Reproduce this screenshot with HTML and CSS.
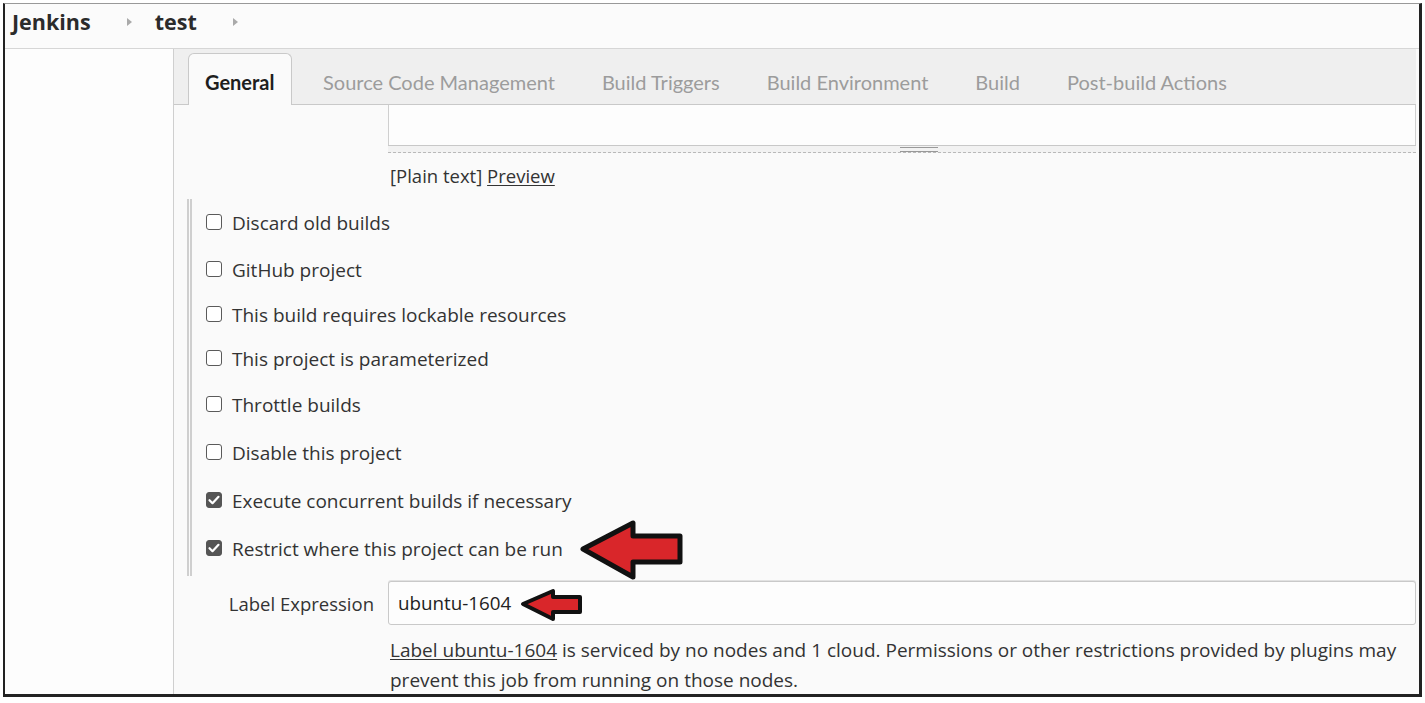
FILE: index.html
```html
<!DOCTYPE html>
<html lang="en">
<head>
<meta charset="utf-8">
<title>test Config [Jenkins]</title>
<link rel="stylesheet" href="styles.css">
</head>
<body>
<div class="frame">
  <header class="crumbs">
    <span class="crumb">Jenkins</span><span class="sep"></span><span class="crumb">test</span><span class="sep"></span>
  </header>
  <div class="layout">
    <aside class="side"></aside>
    <main class="main">
      <nav class="tabs">
        <div class="tab active">General</div>
        <div class="tab first">Source Code Management</div>
        <div class="tab">Build Triggers</div>
        <div class="tab">Build Environment</div>
        <div class="tab">Build</div>
        <div class="tab">Post-build Actions</div>
      </nav>
      <div class="content">
        <div class="desc">
          <div class="textarea"></div>
          <div class="grip"><span class="grip-handle"></span></div>
        </div>
        <div class="markup">[Plain text] <a class="link">Preview</a></div>
        <section class="opts">
          <label class="opt"><span class="box"></span>Discard old builds</label>
          <label class="opt h46"><span class="box"></span>GitHub project</label>
          <label class="opt h43"><span class="box"></span>This build requires lockable resources</label>
          <label class="opt h45"><span class="box"></span>This project is parameterized</label>
          <label class="opt"><span class="box"></span>Throttle builds</label>
          <label class="opt"><span class="box"></span>Disable this project</label>
          <label class="opt"><span class="box checked"><svg viewBox="0 0 16 16" width="16" height="16"><path d="M3.5 8.2l3 3 6-6.4" fill="none" stroke="#fff" stroke-width="2.2" stroke-linecap="round" stroke-linejoin="round"/></svg></span>Execute concurrent builds if necessary</label>
          <label class="opt"><span class="box checked"><svg viewBox="0 0 16 16" width="16" height="16"><path d="M3.5 8.2l3 3 6-6.4" fill="none" stroke="#fff" stroke-width="2.2" stroke-linecap="round" stroke-linejoin="round"/></svg></span>Restrict where this project can be run</label>
        </section>
        <div class="field">
          <span class="flabel">Label Expression</span>
          <div class="input">ubuntu-1604</div>
        </div>
        <p class="help"><a class="link">Label ubuntu-1604</a> is serviced by no nodes and 1 cloud. Permissions or other restrictions provided by plugins may prevent this job from running on those nodes.</p>
      </div>
    </main>
  </div>
  <svg class="arrow arrow-big" width="115" height="70" viewBox="0 0 115 70">
    <polygon points="8,34 58,8 58,21 105,21 105,47 58,47 58,62" fill="#d9262a" stroke="#111" stroke-width="5" stroke-linejoin="round"/>
  </svg>
  <svg class="arrow arrow-small" width="70" height="42" viewBox="0 0 70 42">
    <polygon points="5,19 35,6 35,12 62,12 62,27 35,27 35,34" fill="#d9262a" stroke="#111" stroke-width="4" stroke-linejoin="round"/>
  </svg>
</div>
</body>
</html>
```
FILE: styles.css
```css
html, body {
  margin: 0;
  padding: 0;
  background: #ffffff;
}

body {
  font-family: "Open Sans", "Noto Sans", sans-serif;
  color: #333;
}

.frame {
  position: relative;
  box-sizing: border-box;
  margin: 3px 0 0 3px;
  width: 1419px;
  height: 694px;
  border-left: 2px solid #222;
  border-right: 3px solid #222;
  border-top: 1px solid #999;
  border-bottom: 3px solid #222;
  background: #fcfcfc;
  overflow: hidden;
  display: flex;
  flex-direction: column;
}

/* breadcrumb header */
.crumbs {
  height: 45px;
  flex: none;
  border-bottom: 1px solid #d6d6d6;
  display: flex;
  align-items: center;
  padding-left: 7px;
  padding-bottom: 9px;
  box-sizing: border-box;
  background: #fbfbfb;
}

.crumb {
  font-weight: 700;
  font-size: 21.5px;
  color: #2b2b2b;
}

.sep {
  width: 0;
  height: 0;
  border-top: 4px solid transparent;
  border-bottom: 4px solid transparent;
  border-left: 5px solid #aaa;
  margin: 0 23px 0 36px;
}

.layout {
  flex: 1;
  display: flex;
  min-height: 0;
}

.side {
  width: 168px;
  flex: none;
  border-right: 1px solid #cfcfcf;
  background: #fdfdfd;
}

.main {
  flex: 1;
  padding-right: 3px;
  min-width: 0;
  background: #fafafa;
}

/* tabs */
.tabs {
  height: 56px;
  box-sizing: border-box;
  background: #efefef;
  border-bottom: 1px solid #c9c9c9;
  display: flex;
  align-items: flex-end;
  padding-left: 14px;
}

.tab {
  height: 51px;
  display: flex;
  align-items: center;
  padding: 6px 23.5px 0;
  box-sizing: border-box;
  font-family: Lato, "Open Sans", sans-serif;
  font-size: 20px;
  color: #9c9c9c;
  white-space: nowrap;
}

.tab.first {
  margin-left: 8px;
}

.tab.active {
  height: 52px;
  margin-bottom: -1px;
  padding: 4px 16px 0;
  background: #fafafa;
  border: 1px solid #c9c9c9;
  border-bottom: none;
  border-radius: 6px 6px 0 0;
  color: #1e1e1e;
  font-weight: 700;
}

/* description textarea remnant */
.desc {
  margin-left: 214px;
}

.textarea {
  height: 40px;
  background: #fdfdfd;
  border-left: 1px solid #cfcfcf;
  border-right: 1px solid #cfcfcf;
}

.grip {
  height: 6px;
  border-top: 1px solid #c8c8c8;
  border-bottom: 1px dashed #b9b9b9;
  background: #f2f2f2;
  display: flex;
  justify-content: center;
  padding-left: 34px;
}

.grip-handle {
  width: 38px;
  height: 3px;
  margin-top: 1px;
  border-top: 1px solid #999;
  border-bottom: 1px solid #999;
}

.markup {
  margin: 11px 0 0 216px;
  font-size: 18.5px;
  line-height: 24px;
  color: #333;
}

.link {
  color: #333;
  text-decoration: underline;
  text-underline-offset: 2px;
}

/* options */
.opts {
  margin: 11px 0 0 13px;
  padding-bottom: 3px;
  border-left: 5px double #cfcfcf;
  display: flex;
  flex-direction: column;
}

.opt {
  height: 48px;
  display: flex;
  align-items: center;
  gap: 10px;
  padding-left: 14px;
  font-size: 19px;
  color: #333;
}

.opt.h46 { height: 46px; }
.opt.h43 { height: 43px; }
.opt.h45 { height: 45px; }

.box {
  width: 16px;
  height: 16px;
  box-sizing: border-box;
  border: 1.5px solid #5a5a5a;
  border-radius: 3px;
  background: #fff;
  flex: none;
  display: flex;
  align-items: center;
  justify-content: center;
  margin-top: -2px;
}

.box.checked {
  background: #555;
  border-color: #555;
}

.box svg {
  display: block;
  flex: none;
}

/* label expression */
.field {
  margin-top: 5px;
  display: flex;
  align-items: center;
  height: 44px;
}

.flabel {
  width: 214px;
  flex: none;
  box-sizing: border-box;
  padding-right: 14px;
  text-align: right;
  font-size: 18.5px;
  color: #333;
}

.input {
  flex: 1;
  height: 44px;
  box-sizing: border-box;
  border: 1px solid #c9c9c9;
  border-radius: 3px;
  background: #fdfdfd;
  padding: 0 9px;
  display: flex;
  align-items: center;
  font-size: 18.8px;
  color: #222;
  box-shadow: 0 -1px 0 #e2e2e2;
}

.help {
  margin: 10px 0 0 216px;
  font-size: 19px;
  line-height: 30px;
  color: #333;
}

/* annotation arrows */
.arrow {
  position: absolute;
}

.arrow-big {
  left: 570px;
  top: 511px;
}

.arrow-small {
  left: 513px;
  top: 581px;
}
```
